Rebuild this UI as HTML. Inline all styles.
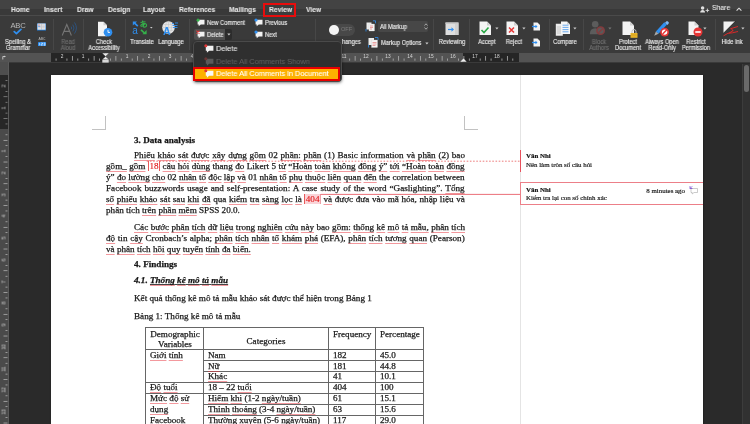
<!DOCTYPE html><html><head><meta charset="utf-8"><style>
html,body{margin:0;padding:0;}
body{width:750px;height:424px;overflow:hidden;position:relative;background:#2a2a2a;}
.t{position:absolute;white-space:nowrap;will-change:transform;}
.r{position:absolute;}
.sq{text-decoration:underline solid rgba(232,50,60,0.5);text-decoration-thickness:0.9px;text-underline-offset:2px;text-decoration-skip-ink:none;}
.doc{-webkit-text-stroke:0.25px #222;}
</style></head><body>
<div class="r" style="left:0.00px;top:0.00px;width:750.00px;height:8.50px;background:#434343;"></div>
<div class="r" style="left:0.00px;top:8.50px;width:750.00px;height:6.50px;background:#393939;"></div>
<div class="r" style="left:0.00px;top:15.00px;width:750.00px;height:1.00px;background:#4a4a4a;"></div>
<div class="r" style="left:0.00px;top:16.00px;width:750.00px;height:37.00px;background:#3a3a3a;"></div>
<div class="r" style="left:264.00px;top:4.00px;width:31.00px;height:12.50px;background:#3c3c3c;"></div>
<div class="t" style="top:5.77px;font:normal bold 7.6px/7.6px 'Liberation Sans', sans-serif;color:#e6e6e6;-webkit-text-stroke:0.08px #e6e6e6;left:11.30px;transform:scaleX(0.885);transform-origin:left center;">Home</div>
<div class="t" style="top:5.77px;font:normal bold 7.6px/7.6px 'Liberation Sans', sans-serif;color:#e6e6e6;-webkit-text-stroke:0.08px #e6e6e6;left:44.20px;transform:scaleX(0.885);transform-origin:left center;">Insert</div>
<div class="t" style="top:5.77px;font:normal bold 7.6px/7.6px 'Liberation Sans', sans-serif;color:#e6e6e6;-webkit-text-stroke:0.08px #e6e6e6;left:77.10px;transform:scaleX(0.885);transform-origin:left center;">Draw</div>
<div class="t" style="top:5.77px;font:normal bold 7.6px/7.6px 'Liberation Sans', sans-serif;color:#e6e6e6;-webkit-text-stroke:0.08px #e6e6e6;left:107.50px;transform:scaleX(0.885);transform-origin:left center;">Design</div>
<div class="t" style="top:5.77px;font:normal bold 7.6px/7.6px 'Liberation Sans', sans-serif;color:#e6e6e6;-webkit-text-stroke:0.08px #e6e6e6;left:143.10px;transform:scaleX(0.885);transform-origin:left center;">Layout</div>
<div class="t" style="top:5.77px;font:normal bold 7.6px/7.6px 'Liberation Sans', sans-serif;color:#e6e6e6;-webkit-text-stroke:0.08px #e6e6e6;left:178.80px;transform:scaleX(0.885);transform-origin:left center;">References</div>
<div class="t" style="top:5.77px;font:normal bold 7.6px/7.6px 'Liberation Sans', sans-serif;color:#e6e6e6;-webkit-text-stroke:0.08px #e6e6e6;left:228.90px;transform:scaleX(0.885);transform-origin:left center;">Mailings</div>
<div class="t" style="top:5.77px;font:normal bold 7.6px/7.6px 'Liberation Sans', sans-serif;color:#e6e6e6;-webkit-text-stroke:0.08px #e6e6e6;left:269.20px;transform:scaleX(0.885);transform-origin:left center;">Review</div>
<div class="t" style="top:5.77px;font:normal bold 7.6px/7.6px 'Liberation Sans', sans-serif;color:#e6e6e6;-webkit-text-stroke:0.08px #e6e6e6;left:305.90px;transform:scaleX(0.885);transform-origin:left center;">View</div>
<div class="r" style="left:263.00px;top:2.90px;width:32.80px;height:14.10px;background:transparent;box-sizing:border-box;border:2.2px solid #e80c0c;"></div>
<svg class="r" style="left:700px;top:5.5px" width="10" height="7" viewBox="0 0 10 7"><circle cx="2.6" cy="1.9" r="1.75" fill="#e0e0e0"/><path d="M0.2 6.6Q0.2 3.9 2.6 3.9Q5 3.9 5 6.6Z" fill="#e0e0e0"/><path d="M7.4 2.6v3.6M5.6 4.4h3.6" stroke="#e0e0e0" stroke-width="0.9"/></svg>
<div class="t" style="top:4.30px;font:normal normal 7.8px/7.8px 'Liberation Sans', sans-serif;color:#e6e6e6;-webkit-text-stroke:0.1px #e6e6e6;left:711.60px;transform:scaleX(0.88);transform-origin:left center;">Share</div>
<svg class="r" style="left:735.5px;top:7.3px" width="6" height="4.5" viewBox="0 0 6 4.5"><path d="M0.6 3.6L3 1.2L5.4 3.6" stroke="#e0e0e0" stroke-width="1.1" fill="none"/></svg>
<div class="r" style="left:53.30px;top:19.00px;width:1.00px;height:31.00px;background:#474747;"></div>
<div class="r" style="left:82.60px;top:19.00px;width:1.00px;height:31.00px;background:#474747;"></div>
<div class="r" style="left:125.20px;top:19.00px;width:1.00px;height:31.00px;background:#474747;"></div>
<div class="r" style="left:188.60px;top:19.00px;width:1.00px;height:31.00px;background:#474747;"></div>
<div class="r" style="left:315.30px;top:19.00px;width:1.00px;height:31.00px;background:#474747;"></div>
<div class="r" style="left:433.30px;top:19.00px;width:1.00px;height:31.00px;background:#474747;"></div>
<div class="r" style="left:468.80px;top:19.00px;width:1.00px;height:31.00px;background:#474747;"></div>
<div class="r" style="left:548.50px;top:19.00px;width:1.00px;height:31.00px;background:#474747;"></div>
<div class="r" style="left:582.60px;top:19.00px;width:1.00px;height:31.00px;background:#474747;"></div>
<div class="r" style="left:715.20px;top:19.00px;width:1.00px;height:31.00px;background:#474747;"></div>
<div class="t" style="top:21.58px;font:normal normal 7.7px/7.7px 'Liberation Sans', sans-serif;color:#b8b8b8;letter-spacing:-0.3px;left:-82.40px;width:200px;text-align:center;">ABC</div>
<svg class="r" style="left:13.3px;top:28.2px" width="9" height="7" viewBox="0 0 9 7"><path d="M1.3 3.7L3.4 5.6L7.9 1.4" stroke="#2f8ff0" stroke-width="1.8" fill="none" stroke-linecap="round" stroke-linejoin="round"/></svg>
<div class="t" style="top:38.97px;font:normal normal 6.3px/6.3px 'Liberation Sans', sans-serif;color:#ececec;-webkit-text-stroke:0.14px #ececec;left:-82.10px;width:200px;text-align:center;transform:scaleX(0.91);transform-origin:center center;">Spelling &</div>
<div class="t" style="top:44.87px;font:normal normal 6.3px/6.3px 'Liberation Sans', sans-serif;color:#ececec;-webkit-text-stroke:0.14px #ececec;left:-82.10px;width:200px;text-align:center;transform:scaleX(0.91);transform-origin:center center;">Grammar</div>
<svg class="r" style="left:37px;top:22.5px" width="9" height="8" viewBox="0 0 9 8"><rect x="0" y="0.5" width="9" height="7" fill="#1f7fe0"/><rect x="0.5" y="0.5" width="8" height="6.2" fill="#ececec"/><path d="M4.5 0.5v6.2" stroke="#999" stroke-width="0.4"/><path d="M1.2 2h2.6M1.2 3.4h2.6M1.2 4.8h2.6M5.2 2h2.6M5.2 3.4h2.6M5.2 4.8h2.6" stroke="#aab" stroke-width="0.5"/><path d="M1.2 2h1.5" stroke="#e05050" stroke-width="0.6"/><path d="M1.2 3.4h2" stroke="#3a8ae0" stroke-width="0.6"/></svg>
<div class="t" style="top:38.22px;font:normal normal 3.4px/3.4px 'Liberation Sans', sans-serif;color:#bdbdbd;left:-58.30px;width:200px;text-align:center;">ABC</div>
<svg class="r" style="left:37.5px;top:42.1px" width="8.5" height="4.3" viewBox="0 0 8.5 4.3"><rect x="0" y="0" width="8.5" height="4.3" rx="0.5" fill="#2f8ff0"/><path d="M1.6 1v2.3M3.2 1h1.3v1.15h-1.3v1.15h1.3M5.7 1h1.3v2.3h-1.3M5.7 2.15h1.3" stroke="#fff" stroke-width="0.55" fill="none"/></svg>
<svg class="r" style="left:60.5px;top:20.5px" width="16" height="16" viewBox="0 0 16 16"><path d="M1.2 14.5L5.8 3.5L10.4 14.5M2.9 10.4h5.8" stroke="#747474" stroke-width="1.1" fill="none"/><path d="M10.2 5.6q1 1.4 0 2.8M11.8 3.6q2.4 3.4 0 6.8M13.5 1.4q3.8 5.6 0 11.2" stroke="#2e527c" stroke-width="1" fill="none"/></svg>
<div class="t" style="top:38.97px;font:normal normal 6.3px/6.3px 'Liberation Sans', sans-serif;color:#707070;-webkit-text-stroke:0.14px #707070;left:-32.20px;width:200px;text-align:center;transform:scaleX(0.91);transform-origin:center center;">Read</div>
<div class="t" style="top:44.87px;font:normal normal 6.3px/6.3px 'Liberation Sans', sans-serif;color:#707070;-webkit-text-stroke:0.14px #707070;left:-32.00px;width:200px;text-align:center;transform:scaleX(0.91);transform-origin:center center;">Aloud</div>
<svg class="r" style="left:96.5px;top:20.5px" width="16" height="16" viewBox="0 0 16 16"><path d="M1 0.7h5.5l3.5 3.5v11H1z" fill="#f4f4f4"/><path d="M6.5 0.7v3.5h3.5" fill="#cfcfcf"/><circle cx="11" cy="11.2" r="4.3" fill="#2f8ff0"/><path d="M11 8.8v2.6h2" stroke="#fff" stroke-width="0.9" fill="none"/></svg>
<div class="t" style="top:38.97px;font:normal normal 6.3px/6.3px 'Liberation Sans', sans-serif;color:#ececec;-webkit-text-stroke:0.14px #ececec;left:3.90px;width:200px;text-align:center;transform:scaleX(0.91);transform-origin:center center;">Check</div>
<div class="t" style="top:44.87px;font:normal normal 6.3px/6.3px 'Liberation Sans', sans-serif;color:#ececec;-webkit-text-stroke:0.14px #ececec;left:3.70px;width:200px;text-align:center;transform:scaleX(0.91);transform-origin:center center;">Accessibility</div>
<svg class="r" style="left:131px;top:19px" width="23" height="17" viewBox="0 0 23 17"><path d="M6.8 7.2L3 3.6" stroke="#2f8ff0" stroke-width="1.7"/><path d="M1.8 2.4h4.2l-4.2 4.2z" fill="#2f8ff0"/><text x="1.2" y="14.9" font-family="Liberation Sans" font-size="10" fill="#2f8ff0">a</text><path d="M9.5 3.4l5-0.6M11.6 1.5q0.2 3.5 1.3 7.2M13.8 4.6q-2.5 3.5-3.8 2.5q-1-1 2-2.3q3.5-1 3.6 1.4q0 1.8-2.4 2" stroke="#35b04a" stroke-width="1.05" fill="none"/><path d="M10 10.8l3.4 3.2" stroke="#35b04a" stroke-width="1.7"/><path d="M15.6 15.2h-4.2l4.2-4.2z" fill="#35b04a"/><path d="M19 8h2.6l-1.3 1.5z" fill="#ccc"/></svg>
<div class="t" style="top:38.97px;font:normal normal 6.3px/6.3px 'Liberation Sans', sans-serif;color:#ececec;-webkit-text-stroke:0.14px #ececec;left:42.40px;width:200px;text-align:center;transform:scaleX(0.91);transform-origin:center center;">Translate</div>
<svg class="r" style="left:161px;top:20px" width="20" height="16" viewBox="0 0 20 16"><circle cx="7.5" cy="7.5" r="6.3" fill="#e6e6e6"/><path d="M1.5 7.5h12M7.5 1.2v12.6M2.5 4.5h10M2.5 10.5h10" stroke="#b8b8b8" stroke-width="0.35"/><ellipse cx="7.5" cy="7.5" rx="3" ry="6.3" stroke="#b8b8b8" stroke-width="0.35" fill="none"/><path d="M11 3.5h2M14 3h3M11.5 5.5h5M12 7.5h4.5" stroke="#2f8ff0" stroke-width="0.9"/><text x="2" y="15" font-family="Liberation Sans" font-weight="bold" font-size="10.5" fill="#2f8ff0">A</text></svg>
<div class="t" style="top:38.97px;font:normal normal 6.3px/6.3px 'Liberation Sans', sans-serif;color:#ececec;-webkit-text-stroke:0.14px #ececec;left:70.50px;width:200px;text-align:center;transform:scaleX(0.91);transform-origin:center center;">Language</div>
<div class="r" style="left:194.00px;top:29.20px;width:31.00px;height:10.40px;background:#505050;border-radius:2px 0 0 2px;"></div>
<div class="r" style="left:225.00px;top:29.20px;width:7.20px;height:10.40px;background:#2c2c2c;border-radius:0 2px 2px 0;"></div>
<svg class="r" style="left:227px;top:33px" width="4" height="3" viewBox="0 0 4 3"><path d="M0.3 0.5h3.2l-1.6 2z" fill="#ccc"/></svg>
<svg class="r" style="left:196px;top:18.2px" width="11" height="10" viewBox="0 0 11 10"><path d="M1.6 1.7h6.9v4.8h-3.7l-2.1 1.8v-1.8h-1.1z" fill="#f2f2f2"/><path d="M2 0.3l1.9 1.9l-1.9 1.9l-1.9-1.9z" fill="#35b04a"/></svg>
<div class="t" style="top:19.67px;font:normal normal 6.3px/6.3px 'Liberation Sans', sans-serif;color:#ececec;-webkit-text-stroke:0.14px #ececec;left:207.40px;transform:scaleX(0.91);transform-origin:left center;">New Comment</div>
<svg class="r" style="left:196px;top:29.8px" width="11" height="10" viewBox="0 0 11 10"><path d="M1.6 1.7h6.9v4.8h-3.7l-2.1 1.8v-1.8h-1.1z" fill="#f2f2f2"/><path d="M0.4 0.6l3 3M3.4 0.6l-3 3" stroke="#e03838" stroke-width="1.1"/></svg>
<div class="t" style="top:31.67px;font:normal normal 6.3px/6.3px 'Liberation Sans', sans-serif;color:#ececec;-webkit-text-stroke:0.14px #ececec;left:207.40px;transform:scaleX(0.91);transform-origin:left center;">Delete</div>
<svg class="r" style="left:253.5px;top:18.2px" width="11" height="10" viewBox="0 0 11 10"><path d="M1.6 1.7h6.9v4.8h-3.7l-2.1 1.8v-1.8h-1.1z" fill="#f2f2f2"/><circle cx="2" cy="2" r="1.6" fill="#2f8ff0"/></svg>
<div class="t" style="top:19.67px;font:normal normal 6.3px/6.3px 'Liberation Sans', sans-serif;color:#ececec;-webkit-text-stroke:0.14px #ececec;left:264.70px;transform:scaleX(0.91);transform-origin:left center;">Previous</div>
<svg class="r" style="left:253.5px;top:29.8px" width="11" height="10" viewBox="0 0 11 10"><path d="M1.6 1.7h6.9v4.8h-3.7l-2.1 1.8v-1.8h-1.1z" fill="#f2f2f2"/><circle cx="2" cy="2" r="1.6" fill="#2f8ff0"/></svg>
<div class="t" style="top:31.67px;font:normal normal 6.3px/6.3px 'Liberation Sans', sans-serif;color:#ececec;-webkit-text-stroke:0.14px #ececec;left:264.70px;transform:scaleX(0.91);transform-origin:left center;">Next</div>
<div class="r" style="left:328.80px;top:24.40px;width:26.40px;height:11.20px;background:#484848;border-radius:6px;"></div>
<div class="r" style="left:328.90px;top:24.60px;width:10.60px;height:10.80px;background:#f4f4f4;border-radius:50%;"></div>
<div class="t" style="top:27.16px;font:normal normal 5.6px/5.6px 'Liberation Sans', sans-serif;color:#7a7a7a;left:341.30px;">OFF</div>
<div class="t" style="top:38.97px;font:normal normal 6.3px/6.3px 'Liberation Sans', sans-serif;color:#ececec;-webkit-text-stroke:0.14px #ececec;left:342.20px;transform:scaleX(0.91);transform-origin:left center;">hanges</div>
<svg class="r" style="left:365px;top:20px" width="12" height="12" viewBox="0 0 12 12"><rect x="1.5" y="2.5" width="5" height="7" fill="#eee"/><rect x="4" y="4" width="5.5" height="7" fill="#f4f4f4" stroke="#ccc" stroke-width="0.3"/><path d="M5 6h3M5 7.5h3M5 9h2" stroke="#e05050" stroke-width="0.5"/><path d="M8 0.8h2.5v2.5M1 11.5v-2.5" stroke="#2f8ff0" stroke-width="0.8" fill="none"/></svg>
<div class="r" style="left:378.00px;top:21.20px;width:50.40px;height:10.40px;background:#474747;border-radius:2px;"></div>
<div class="t" style="top:23.97px;font:normal normal 6.3px/6.3px 'Liberation Sans', sans-serif;color:#ececec;-webkit-text-stroke:0.14px #ececec;left:380.00px;transform:scaleX(0.91);transform-origin:left center;">All Markup</div>
<svg class="r" style="left:423.5px;top:22.5px" width="4" height="7" viewBox="0 0 4 7"><path d="M0.5 2.5L2 0.8L3.5 2.5M0.5 4.5L2 6.2L3.5 4.5" stroke="#ccc" stroke-width="0.7" fill="none"/></svg>
<svg class="r" style="left:368px;top:36.5px" width="11" height="11" viewBox="0 0 11 11"><rect x="0.5" y="1" width="5.5" height="7" fill="#eee"/><rect x="3.5" y="3" width="6" height="7.5" fill="#f4f4f4" stroke="#ccc" stroke-width="0.3"/><path d="M4.5 5.5h4M4.5 7h4M4.5 8.5h3" stroke="#e05050" stroke-width="0.5"/><path d="M7 0.5h3v2.5M0.5 10.5v-2.5" stroke="#2f8ff0" stroke-width="0.8" fill="none"/></svg>
<div class="t" style="top:39.87px;font:normal normal 6.3px/6.3px 'Liberation Sans', sans-serif;color:#ececec;-webkit-text-stroke:0.14px #ececec;left:380.90px;transform:scaleX(0.91);transform-origin:left center;">Markup Options</div>
<svg class="r" style="left:424.5px;top:41.5px" width="4" height="3" viewBox="0 0 4 3"><path d="M0.3 0.5h3.2l-1.6 2z" fill="#ccc"/></svg>
<svg class="r" style="left:444.5px;top:21.5px" width="14" height="13.5" viewBox="0 0 14 13.5"><rect x="0.5" y="0.5" width="13" height="12.5" fill="#dedede"/><rect x="0.5" y="0.5" width="13" height="1.5" fill="#c8c8c8"/><rect x="10" y="2" width="3.5" height="11" fill="#cfcfcf"/><path d="M3 7.5h5" stroke="#2f8ff0" stroke-width="1.2"/><path d="M6.5 5.3l2.5 2.2l-2.5 2.2z" fill="#2f8ff0"/></svg>
<div class="t" style="top:38.97px;font:normal normal 6.3px/6.3px 'Liberation Sans', sans-serif;color:#ececec;-webkit-text-stroke:0.14px #ececec;left:351.80px;width:200px;text-align:center;transform:scaleX(0.91);transform-origin:center center;">Reviewing</div>
<svg class="r" style="left:478.5px;top:21px" width="13" height="16" viewBox="0 0 13 16"><path d="M0.5 0.5h7.5l4 4v9.5h-11.5z" fill="#f4f4f4"/><path d="M8.0 0.5v4h4" fill="#d0d0d0"/><path d="M2.5 9L5 11.5L9.5 6.5" stroke="#2aa845" stroke-width="1.6" fill="none"/></svg>
<svg class="r" style="left:494.5px;top:27px" width="4" height="3" viewBox="0 0 4 3"><path d="M0.3 0.5h3.2l-1.6 2z" fill="#ccc"/></svg>
<div class="t" style="top:38.97px;font:normal normal 6.3px/6.3px 'Liberation Sans', sans-serif;color:#ececec;-webkit-text-stroke:0.14px #ececec;left:386.80px;width:200px;text-align:center;transform:scaleX(0.91);transform-origin:center center;">Accept</div>
<svg class="r" style="left:505.8px;top:21px" width="13" height="16" viewBox="0 0 13 16"><path d="M0.5 0.5h7.5l4 4v9.5h-11.5z" fill="#f4f4f4"/><path d="M8.0 0.5v4h4" fill="#d0d0d0"/><path d="M3 6.5l5 5M8 6.5l-5 5" stroke="#e53535" stroke-width="1.5"/></svg>
<svg class="r" style="left:521.6px;top:27px" width="4" height="3" viewBox="0 0 4 3"><path d="M0.3 0.5h3.2l-1.6 2z" fill="#ccc"/></svg>
<div class="t" style="top:38.97px;font:normal normal 6.3px/6.3px 'Liberation Sans', sans-serif;color:#ececec;-webkit-text-stroke:0.14px #ececec;left:413.80px;width:200px;text-align:center;transform:scaleX(0.91);transform-origin:center center;">Reject</div>
<svg class="r" style="left:532px;top:22.3px" width="9" height="9" viewBox="0 0 9 9"><path d="M1.5 0.5h4l2.5 2.5v5.5h-6.5z" fill="#f2f2f2"/><path d="M0 4.5h4.5" stroke="#2f8ff0" stroke-width="1.3"/><path d="M3.5 2.8l2 1.7l-2 1.7z" fill="#2f8ff0"/></svg>
<svg class="r" style="left:532px;top:37.5px" width="9" height="9" viewBox="0 0 9 9"><path d="M1.5 0.5h4l2.5 2.5v5.5h-6.5z" fill="#f2f2f2"/><path d="M0 4.5h4.5" stroke="#2f8ff0" stroke-width="1.3"/><path d="M3.5 2.8l2 1.7l-2 1.7z" fill="#2f8ff0"/></svg>
<svg class="r" style="left:555px;top:20.5px" width="17" height="16" viewBox="0 0 17 16"><path d="M0.8 2.8h5.5l1.5 1.5v10.5h-7z" fill="#ececec"/><path d="M1.8 6h4.5M1.8 8h4.5M1.8 10h4.5M1.8 12h4.5" stroke="#aaa" stroke-width="0.55"/><path d="M6 0.5h6l3 3v9.5h-9z" fill="#f6f6f6"/><path d="M12 0.5v3h3" fill="#cfcfcf"/><path d="M7.5 4.2h6M7.5 6.4h6M7.5 8.6h6M7.5 10.8h6" stroke="#5aa2ee" stroke-width="0.9"/></svg>
<svg class="r" style="left:573px;top:27px" width="4" height="3" viewBox="0 0 4 3"><path d="M0.3 0.5h3.2l-1.6 2z" fill="#ccc"/></svg>
<div class="t" style="top:38.97px;font:normal normal 6.3px/6.3px 'Liberation Sans', sans-serif;color:#ececec;-webkit-text-stroke:0.14px #ececec;left:465.20px;width:200px;text-align:center;transform:scaleX(0.91);transform-origin:center center;">Compare</div>
<svg class="r" style="left:589px;top:20px" width="17" height="16" viewBox="0 0 17 16"><circle cx="6.2" cy="4.3" r="3.3" fill="#5c5c5c"/><path d="M0.8 14.2q0-6 5.4-6q5.4 0 5.4 6z" fill="#5c5c5c"/><circle cx="11.6" cy="10.7" r="4.4" fill="#843c3e"/><circle cx="11.6" cy="10.7" r="2.9" fill="#5a5a5a"/><path d="M9.4 12.9l4.4-4.4" stroke="#843c3e" stroke-width="1.3"/></svg>
<svg class="r" style="left:607.5px;top:27px" width="4" height="3" viewBox="0 0 4 3"><path d="M0.3 0.5h3.2l-1.6 2z" fill="#777"/></svg>
<div class="t" style="top:38.97px;font:normal normal 6.3px/6.3px 'Liberation Sans', sans-serif;color:#707070;-webkit-text-stroke:0.14px #707070;left:499.20px;width:200px;text-align:center;transform:scaleX(0.91);transform-origin:center center;">Block</div>
<div class="t" style="top:44.87px;font:normal normal 6.3px/6.3px 'Liberation Sans', sans-serif;color:#707070;-webkit-text-stroke:0.14px #707070;left:499.20px;width:200px;text-align:center;transform:scaleX(0.91);transform-origin:center center;">Authors</div>
<svg class="r" style="left:622px;top:21px" width="13" height="16" viewBox="0 0 13 16"><path d="M0.5 0.5h7.5l4 4v9.5h-11.5z" fill="#f4f4f4"/><path d="M8.0 0.5v4h4" fill="#d0d0d0"/></svg>
<svg class="r" style="left:629.5px;top:28.5px" width="8" height="9" viewBox="0 0 8 9"><path d="M2 4v-1.5a2 2 0 0 1 4 0v1.5" stroke="#bdbdbd" stroke-width="1" fill="none"/><rect x="0.5" y="4" width="7" height="4.8" fill="#e9b62a"/><path d="M1.2 5.4h5.6M1.2 6.6h5.6" stroke="#c99418" stroke-width="0.35"/></svg>
<div class="t" style="top:38.97px;font:normal normal 6.3px/6.3px 'Liberation Sans', sans-serif;color:#ececec;-webkit-text-stroke:0.14px #ececec;left:527.90px;width:200px;text-align:center;transform:scaleX(0.91);transform-origin:center center;">Protect</div>
<div class="t" style="top:44.87px;font:normal normal 6.3px/6.3px 'Liberation Sans', sans-serif;color:#ececec;-webkit-text-stroke:0.14px #ececec;left:528.00px;width:200px;text-align:center;transform:scaleX(0.91);transform-origin:center center;">Document</div>
<svg class="r" style="left:653px;top:20px" width="17" height="17" viewBox="0 0 17 17"><path d="M4.2 12.6L12.6 3.4" stroke="#2f8ff0" stroke-width="3.6"/><path d="M12 2.8l1.2-1.3a1.2 1.2 0 0 1 1.7 0l0.6 0.6a1.2 1.2 0 0 1 0 1.7l-1.2 1.3z" fill="#7db8f5"/><path d="M2.9 11.4l2.6 2.4l-4.3 2z" fill="#a9a9a9"/><circle cx="11.6" cy="12.1" r="4.4" fill="#e53535"/><circle cx="11.6" cy="12.1" r="2.7" fill="#fff"/><path d="M9.6 14.1l4-4" stroke="#e53535" stroke-width="1.4"/></svg>
<div class="t" style="top:38.97px;font:normal normal 6.3px/6.3px 'Liberation Sans', sans-serif;color:#ececec;-webkit-text-stroke:0.14px #ececec;left:561.60px;width:200px;text-align:center;transform:scaleX(0.91);transform-origin:center center;">Always Open</div>
<div class="t" style="top:44.87px;font:normal normal 6.3px/6.3px 'Liberation Sans', sans-serif;color:#ececec;-webkit-text-stroke:0.14px #ececec;left:561.90px;width:200px;text-align:center;transform:scaleX(0.91);transform-origin:center center;">Read-Only</div>
<svg class="r" style="left:688px;top:21px" width="12" height="16" viewBox="0 0 12 16"><path d="M0.5 0.5h6l4 4v9.5h-10z" fill="#f4f4f4"/><path d="M6.5 0.5v4h4" fill="#d0d0d0"/></svg>
<svg class="r" style="left:692.5px;top:26.8px" width="10" height="10" viewBox="0 0 10 10"><circle cx="5" cy="5" r="4.5" fill="#e53535"/><rect x="2.3" y="4.2" width="5.4" height="1.6" fill="#fff"/></svg>
<svg class="r" style="left:703px;top:27px" width="4" height="3" viewBox="0 0 4 3"><path d="M0.3 0.5h3.2l-1.6 2z" fill="#ccc"/></svg>
<div class="t" style="top:38.97px;font:normal normal 6.3px/6.3px 'Liberation Sans', sans-serif;color:#ececec;-webkit-text-stroke:0.14px #ececec;left:595.90px;width:200px;text-align:center;transform:scaleX(0.91);transform-origin:center center;">Restrict</div>
<div class="t" style="top:44.87px;font:normal normal 6.3px/6.3px 'Liberation Sans', sans-serif;color:#ececec;-webkit-text-stroke:0.14px #ececec;left:596.10px;width:200px;text-align:center;transform:scaleX(0.91);transform-origin:center center;">Permission</div>
<svg class="r" style="left:722.5px;top:20.5px" width="16" height="16" viewBox="0 0 16 16"><path d="M0.5 0.5h11.7l-11.7 11.7z" fill="#f2f2f2"/><path d="M0.4 12.3L12.3 0.4" stroke="#151515" stroke-width="0.8"/><path d="M7.8 7.6L14.6 5.6M8.2 7.4l1.8 2.4M0.8 14.6Q5 11.2 9.5 11.8L14.6 10.6M9.8 9.8L6.2 12" stroke="#e02828" stroke-width="0.95" fill="none" stroke-linecap="round"/></svg>
<svg class="r" style="left:741px;top:27px" width="4" height="3" viewBox="0 0 4 3"><path d="M0.3 0.5h3.2l-1.6 2z" fill="#ccc"/></svg>
<div class="t" style="top:38.97px;font:normal normal 6.3px/6.3px 'Liberation Sans', sans-serif;color:#ececec;-webkit-text-stroke:0.14px #ececec;left:632.40px;width:200px;text-align:center;transform:scaleX(0.91);transform-origin:center center;">Hide Ink</div>
<div class="r" style="left:0.00px;top:53.00px;width:750.00px;height:9.00px;background:#535353;"></div>
<div class="r" style="left:50.50px;top:53.00px;width:54.50px;height:9.00px;background:#252525;"></div>
<div class="r" style="left:463.30px;top:53.00px;width:55.40px;height:9.00px;background:#252525;"></div>
<div class="r" style="left:0.00px;top:61.60px;width:750.00px;height:0.40px;background:#3a3a3a;"></div>
<svg class="r" style="left:2px;top:55px" width="4" height="5" viewBox="0 0 4 5"><path d="M0.8 4.5v-3h2.5" stroke="#ddd" stroke-width="0.8" fill="none"/><path d="M2.5 0.5l1 1l-1 1z" fill="#ddd"/></svg>
<svg class="r" style="left:0;top:53px" width="750" height="9"><rect x="55.66" y="5.5" width="0.8" height="2.2" fill="#b0b0b0"/><rect x="66.54" y="5.5" width="0.8" height="2.2" fill="#b0b0b0"/><rect x="71.97" y="3" width="0.8" height="4.7" fill="#b0b0b0"/><rect x="77.41" y="5.5" width="0.8" height="2.2" fill="#b0b0b0"/><rect x="88.29" y="5.5" width="0.8" height="2.2" fill="#b0b0b0"/><rect x="93.72" y="3" width="0.8" height="4.7" fill="#b0b0b0"/><rect x="99.16" y="5.5" width="0.8" height="2.2" fill="#b0b0b0"/><rect x="110.04" y="5.5" width="0.8" height="2.2" fill="#b0b0b0"/><rect x="115.47" y="3" width="0.8" height="4.7" fill="#b0b0b0"/><rect x="120.91" y="5.5" width="0.8" height="2.2" fill="#b0b0b0"/><rect x="131.79" y="5.5" width="0.8" height="2.2" fill="#b0b0b0"/><rect x="137.22" y="3" width="0.8" height="4.7" fill="#b0b0b0"/><rect x="142.66" y="5.5" width="0.8" height="2.2" fill="#b0b0b0"/><rect x="153.54" y="5.5" width="0.8" height="2.2" fill="#b0b0b0"/><rect x="158.97" y="3" width="0.8" height="4.7" fill="#b0b0b0"/><rect x="164.41" y="5.5" width="0.8" height="2.2" fill="#b0b0b0"/><rect x="175.29" y="5.5" width="0.8" height="2.2" fill="#b0b0b0"/><rect x="180.72" y="3" width="0.8" height="4.7" fill="#b0b0b0"/><rect x="186.16" y="5.5" width="0.8" height="2.2" fill="#b0b0b0"/><rect x="197.04" y="5.5" width="0.8" height="2.2" fill="#b0b0b0"/><rect x="202.47" y="3" width="0.8" height="4.7" fill="#b0b0b0"/><rect x="207.91" y="5.5" width="0.8" height="2.2" fill="#b0b0b0"/><rect x="218.79" y="5.5" width="0.8" height="2.2" fill="#b0b0b0"/><rect x="224.22" y="3" width="0.8" height="4.7" fill="#b0b0b0"/><rect x="229.66" y="5.5" width="0.8" height="2.2" fill="#b0b0b0"/><rect x="240.54" y="5.5" width="0.8" height="2.2" fill="#b0b0b0"/><rect x="245.97" y="3" width="0.8" height="4.7" fill="#b0b0b0"/><rect x="251.41" y="5.5" width="0.8" height="2.2" fill="#b0b0b0"/><rect x="262.29" y="5.5" width="0.8" height="2.2" fill="#b0b0b0"/><rect x="267.73" y="3" width="0.8" height="4.7" fill="#b0b0b0"/><rect x="273.16" y="5.5" width="0.8" height="2.2" fill="#b0b0b0"/><rect x="284.04" y="5.5" width="0.8" height="2.2" fill="#b0b0b0"/><rect x="289.48" y="3" width="0.8" height="4.7" fill="#b0b0b0"/><rect x="294.91" y="5.5" width="0.8" height="2.2" fill="#b0b0b0"/><rect x="305.79" y="5.5" width="0.8" height="2.2" fill="#b0b0b0"/><rect x="311.23" y="3" width="0.8" height="4.7" fill="#b0b0b0"/><rect x="316.66" y="5.5" width="0.8" height="2.2" fill="#b0b0b0"/><rect x="327.54" y="5.5" width="0.8" height="2.2" fill="#b0b0b0"/><rect x="332.98" y="3" width="0.8" height="4.7" fill="#b0b0b0"/><rect x="338.41" y="5.5" width="0.8" height="2.2" fill="#b0b0b0"/><rect x="349.29" y="5.5" width="0.8" height="2.2" fill="#b0b0b0"/><rect x="354.73" y="3" width="0.8" height="4.7" fill="#b0b0b0"/><rect x="360.16" y="5.5" width="0.8" height="2.2" fill="#b0b0b0"/><rect x="371.04" y="5.5" width="0.8" height="2.2" fill="#b0b0b0"/><rect x="376.48" y="3" width="0.8" height="4.7" fill="#b0b0b0"/><rect x="381.91" y="5.5" width="0.8" height="2.2" fill="#b0b0b0"/><rect x="392.79" y="5.5" width="0.8" height="2.2" fill="#b0b0b0"/><rect x="398.23" y="3" width="0.8" height="4.7" fill="#b0b0b0"/><rect x="403.66" y="5.5" width="0.8" height="2.2" fill="#b0b0b0"/><rect x="414.54" y="5.5" width="0.8" height="2.2" fill="#b0b0b0"/><rect x="419.98" y="3" width="0.8" height="4.7" fill="#b0b0b0"/><rect x="425.41" y="5.5" width="0.8" height="2.2" fill="#b0b0b0"/><rect x="436.29" y="5.5" width="0.8" height="2.2" fill="#b0b0b0"/><rect x="441.73" y="3" width="0.8" height="4.7" fill="#b0b0b0"/><rect x="447.16" y="5.5" width="0.8" height="2.2" fill="#b0b0b0"/><rect x="458.04" y="5.5" width="0.8" height="2.2" fill="#b0b0b0"/><rect x="463.48" y="3" width="0.8" height="4.7" fill="#b0b0b0"/><rect x="468.91" y="5.5" width="0.8" height="2.2" fill="#b0b0b0"/><rect x="479.79" y="5.5" width="0.8" height="2.2" fill="#b0b0b0"/><rect x="485.23" y="3" width="0.8" height="4.7" fill="#b0b0b0"/><rect x="490.66" y="5.5" width="0.8" height="2.2" fill="#b0b0b0"/><rect x="501.54" y="5.5" width="0.8" height="2.2" fill="#b0b0b0"/><rect x="506.98" y="3" width="0.8" height="4.7" fill="#b0b0b0"/><rect x="512.41" y="5.5" width="0.8" height="2.2" fill="#b0b0b0"/></svg>
<div class="t" style="top:54.54px;font:normal normal 4.8px/4.8px 'Liberation Sans', sans-serif;color:#d8d8d8;left:-38.50px;width:200px;text-align:center;">2</div>
<div class="t" style="top:54.54px;font:normal normal 4.8px/4.8px 'Liberation Sans', sans-serif;color:#d8d8d8;left:-16.75px;width:200px;text-align:center;">1</div>
<div class="t" style="top:54.54px;font:normal normal 4.8px/4.8px 'Liberation Sans', sans-serif;color:#d8d8d8;left:26.75px;width:200px;text-align:center;">1</div>
<div class="t" style="top:54.54px;font:normal normal 4.8px/4.8px 'Liberation Sans', sans-serif;color:#d8d8d8;left:48.50px;width:200px;text-align:center;">2</div>
<div class="t" style="top:54.54px;font:normal normal 4.8px/4.8px 'Liberation Sans', sans-serif;color:#d8d8d8;left:70.25px;width:200px;text-align:center;">3</div>
<div class="t" style="top:54.54px;font:normal normal 4.8px/4.8px 'Liberation Sans', sans-serif;color:#d8d8d8;left:92.00px;width:200px;text-align:center;">4</div>
<div class="t" style="top:54.54px;font:normal normal 4.8px/4.8px 'Liberation Sans', sans-serif;color:#d8d8d8;left:113.75px;width:200px;text-align:center;">5</div>
<div class="t" style="top:54.54px;font:normal normal 4.8px/4.8px 'Liberation Sans', sans-serif;color:#d8d8d8;left:135.50px;width:200px;text-align:center;">6</div>
<div class="t" style="top:54.54px;font:normal normal 4.8px/4.8px 'Liberation Sans', sans-serif;color:#d8d8d8;left:157.25px;width:200px;text-align:center;">7</div>
<div class="t" style="top:54.54px;font:normal normal 4.8px/4.8px 'Liberation Sans', sans-serif;color:#d8d8d8;left:179.00px;width:200px;text-align:center;">8</div>
<div class="t" style="top:54.54px;font:normal normal 4.8px/4.8px 'Liberation Sans', sans-serif;color:#d8d8d8;left:200.75px;width:200px;text-align:center;">9</div>
<div class="t" style="top:54.54px;font:normal normal 4.8px/4.8px 'Liberation Sans', sans-serif;color:#d8d8d8;left:222.50px;width:200px;text-align:center;">10</div>
<div class="t" style="top:54.54px;font:normal normal 4.8px/4.8px 'Liberation Sans', sans-serif;color:#d8d8d8;left:244.25px;width:200px;text-align:center;">11</div>
<div class="t" style="top:54.54px;font:normal normal 4.8px/4.8px 'Liberation Sans', sans-serif;color:#d8d8d8;left:266.00px;width:200px;text-align:center;">12</div>
<div class="t" style="top:54.54px;font:normal normal 4.8px/4.8px 'Liberation Sans', sans-serif;color:#d8d8d8;left:287.75px;width:200px;text-align:center;">13</div>
<div class="t" style="top:54.54px;font:normal normal 4.8px/4.8px 'Liberation Sans', sans-serif;color:#d8d8d8;left:309.50px;width:200px;text-align:center;">14</div>
<div class="t" style="top:54.54px;font:normal normal 4.8px/4.8px 'Liberation Sans', sans-serif;color:#d8d8d8;left:331.25px;width:200px;text-align:center;">15</div>
<div class="t" style="top:54.54px;font:normal normal 4.8px/4.8px 'Liberation Sans', sans-serif;color:#d8d8d8;left:353.00px;width:200px;text-align:center;">16</div>
<div class="t" style="top:54.54px;font:normal normal 4.8px/4.8px 'Liberation Sans', sans-serif;color:#d8d8d8;left:374.75px;width:200px;text-align:center;">17</div>
<div class="t" style="top:54.54px;font:normal normal 4.8px/4.8px 'Liberation Sans', sans-serif;color:#d8d8d8;left:396.50px;width:200px;text-align:center;">18</div>
<svg class="r" style="left:101.5px;top:53px" width="7" height="10" viewBox="0 0 7 10"><path d="M0.3 0.3h6.4l-3.2 3z" fill="#e8e8e8"/><path d="M3.5 3.8l3.2 2.6h-6.4z" fill="#e8e8e8"/><rect x="0.3" y="6.8" width="6.4" height="2.8" fill="#d8d8d8"/></svg>
<svg class="r" style="left:460px;top:58px" width="7" height="4" viewBox="0 0 7 4"><path d="M0.3 3.8l3.2-3.2l3.2 3.2z" fill="#eee"/></svg>
<div class="r" style="left:0.00px;top:62.00px;width:8.80px;height:13.00px;background:#4e4e4e;"></div>
<div class="r" style="left:0.00px;top:75.00px;width:8.80px;height:54.40px;background:#272727;"></div>
<div class="r" style="left:0.00px;top:129.40px;width:8.80px;height:294.60px;background:#4a4a4a;"></div>
<div class="r" style="left:8.30px;top:62.00px;width:0.80px;height:362.00px;background:#5a5a5a;"></div>
<svg class="r" style="left:0;top:0" width="9" height="424"><rect x="5.5" y="123.66" width="2" height="0.6" fill="#aaa"/><rect x="3.5" y="118.23" width="4" height="0.6" fill="#aaa"/><rect x="5.5" y="112.79" width="2" height="0.6" fill="#aaa"/><rect x="5.5" y="101.91" width="2" height="0.6" fill="#aaa"/><rect x="3.5" y="96.48" width="4" height="0.6" fill="#aaa"/><rect x="5.5" y="91.04" width="2" height="0.6" fill="#aaa"/><rect x="5.5" y="80.16" width="2" height="0.6" fill="#aaa"/><rect x="5.5" y="134.54" width="2" height="0.6" fill="#cfcfcf"/><rect x="3.5" y="139.97" width="4" height="0.6" fill="#cfcfcf"/><rect x="5.5" y="145.41" width="2" height="0.6" fill="#cfcfcf"/><rect x="5.5" y="156.29" width="2" height="0.6" fill="#cfcfcf"/><rect x="3.5" y="161.72" width="4" height="0.6" fill="#cfcfcf"/><rect x="5.5" y="167.16" width="2" height="0.6" fill="#cfcfcf"/><rect x="5.5" y="178.04" width="2" height="0.6" fill="#cfcfcf"/><rect x="3.5" y="183.47" width="4" height="0.6" fill="#cfcfcf"/><rect x="5.5" y="188.91" width="2" height="0.6" fill="#cfcfcf"/><rect x="5.5" y="199.79" width="2" height="0.6" fill="#cfcfcf"/><rect x="3.5" y="205.22" width="4" height="0.6" fill="#cfcfcf"/><rect x="5.5" y="210.66" width="2" height="0.6" fill="#cfcfcf"/><rect x="5.5" y="221.54" width="2" height="0.6" fill="#cfcfcf"/><rect x="3.5" y="226.97" width="4" height="0.6" fill="#cfcfcf"/><rect x="5.5" y="232.41" width="2" height="0.6" fill="#cfcfcf"/><rect x="5.5" y="243.29" width="2" height="0.6" fill="#cfcfcf"/><rect x="3.5" y="248.72" width="4" height="0.6" fill="#cfcfcf"/><rect x="5.5" y="254.16" width="2" height="0.6" fill="#cfcfcf"/><rect x="5.5" y="265.04" width="2" height="0.6" fill="#cfcfcf"/><rect x="3.5" y="270.47" width="4" height="0.6" fill="#cfcfcf"/><rect x="5.5" y="275.91" width="2" height="0.6" fill="#cfcfcf"/><rect x="5.5" y="286.79" width="2" height="0.6" fill="#cfcfcf"/><rect x="3.5" y="292.22" width="4" height="0.6" fill="#cfcfcf"/><rect x="5.5" y="297.66" width="2" height="0.6" fill="#cfcfcf"/><rect x="5.5" y="308.54" width="2" height="0.6" fill="#cfcfcf"/><rect x="3.5" y="313.97" width="4" height="0.6" fill="#cfcfcf"/><rect x="5.5" y="319.41" width="2" height="0.6" fill="#cfcfcf"/><rect x="5.5" y="330.29" width="2" height="0.6" fill="#cfcfcf"/><rect x="3.5" y="335.72" width="4" height="0.6" fill="#cfcfcf"/><rect x="5.5" y="341.16" width="2" height="0.6" fill="#cfcfcf"/><rect x="5.5" y="352.04" width="2" height="0.6" fill="#cfcfcf"/><rect x="3.5" y="357.47" width="4" height="0.6" fill="#cfcfcf"/><rect x="5.5" y="362.91" width="2" height="0.6" fill="#cfcfcf"/><rect x="5.5" y="373.79" width="2" height="0.6" fill="#cfcfcf"/><rect x="3.5" y="379.22" width="4" height="0.6" fill="#cfcfcf"/><rect x="5.5" y="384.66" width="2" height="0.6" fill="#cfcfcf"/><rect x="5.5" y="395.54" width="2" height="0.6" fill="#cfcfcf"/><rect x="3.5" y="400.97" width="4" height="0.6" fill="#cfcfcf"/><rect x="5.5" y="406.41" width="2" height="0.6" fill="#cfcfcf"/><rect x="5.5" y="417.29" width="2" height="0.6" fill="#cfcfcf"/><rect x="3.5" y="422.72" width="4" height="0.6" fill="#cfcfcf"/></svg>
<div class="t" style="left:0px;top:148.15px;width:9px;height:6px;font:4.6px/6px 'Liberation Sans', sans-serif;color:#d8d8d8;text-align:center;transform:rotate(-90deg)">1</div>
<div class="t" style="left:0px;top:169.90px;width:9px;height:6px;font:4.6px/6px 'Liberation Sans', sans-serif;color:#d8d8d8;text-align:center;transform:rotate(-90deg)">2</div>
<div class="t" style="left:0px;top:191.65px;width:9px;height:6px;font:4.6px/6px 'Liberation Sans', sans-serif;color:#d8d8d8;text-align:center;transform:rotate(-90deg)">3</div>
<div class="t" style="left:0px;top:213.40px;width:9px;height:6px;font:4.6px/6px 'Liberation Sans', sans-serif;color:#d8d8d8;text-align:center;transform:rotate(-90deg)">4</div>
<div class="t" style="left:0px;top:235.15px;width:9px;height:6px;font:4.6px/6px 'Liberation Sans', sans-serif;color:#d8d8d8;text-align:center;transform:rotate(-90deg)">5</div>
<div class="t" style="left:0px;top:256.90px;width:9px;height:6px;font:4.6px/6px 'Liberation Sans', sans-serif;color:#d8d8d8;text-align:center;transform:rotate(-90deg)">6</div>
<div class="t" style="left:0px;top:278.65px;width:9px;height:6px;font:4.6px/6px 'Liberation Sans', sans-serif;color:#d8d8d8;text-align:center;transform:rotate(-90deg)">7</div>
<div class="t" style="left:0px;top:300.40px;width:9px;height:6px;font:4.6px/6px 'Liberation Sans', sans-serif;color:#d8d8d8;text-align:center;transform:rotate(-90deg)">8</div>
<div class="t" style="left:0px;top:322.15px;width:9px;height:6px;font:4.6px/6px 'Liberation Sans', sans-serif;color:#d8d8d8;text-align:center;transform:rotate(-90deg)">9</div>
<div class="t" style="left:0px;top:343.90px;width:9px;height:6px;font:4.6px/6px 'Liberation Sans', sans-serif;color:#d8d8d8;text-align:center;transform:rotate(-90deg)">10</div>
<div class="t" style="left:0px;top:365.65px;width:9px;height:6px;font:4.6px/6px 'Liberation Sans', sans-serif;color:#d8d8d8;text-align:center;transform:rotate(-90deg)">11</div>
<div class="t" style="left:0px;top:387.40px;width:9px;height:6px;font:4.6px/6px 'Liberation Sans', sans-serif;color:#d8d8d8;text-align:center;transform:rotate(-90deg)">12</div>
<div class="t" style="left:0px;top:409.15px;width:9px;height:6px;font:4.6px/6px 'Liberation Sans', sans-serif;color:#d8d8d8;text-align:center;transform:rotate(-90deg)">13</div>
<div class="t" style="left:0px;top:104.65px;width:9px;height:6px;font:4.6px/6px 'Liberation Sans', sans-serif;color:#d8d8d8;text-align:center;transform:rotate(-90deg)">1</div>
<div class="t" style="left:0px;top:82.90px;width:9px;height:6px;font:4.6px/6px 'Liberation Sans', sans-serif;color:#d8d8d8;text-align:center;transform:rotate(-90deg)">2</div>
<div class="r" style="left:741.80px;top:64.00px;width:8.20px;height:360.00px;background:#313131;border-left:0.5px solid #3c3c3c;"></div>
<div class="r" style="left:743.80px;top:65.30px;width:5.10px;height:27.20px;background:#6a6a6a;border-radius:3px;"></div>
<div class="r" style="left:50.50px;top:74.50px;width:652.50px;height:349.50px;background:#ffffff;box-shadow:0 0 1.5px 0.5px #161616;"></div>
<div class="r" style="left:105.00px;top:116.00px;width:0.80px;height:13.80px;background:#c2c2c2;"></div>
<div class="r" style="left:92.00px;top:129.00px;width:13.80px;height:0.80px;background:#c2c2c2;"></div>
<div class="r" style="left:464.20px;top:116.00px;width:0.80px;height:13.60px;background:#c2c2c2;"></div>
<div class="r" style="left:464.20px;top:128.90px;width:13.80px;height:0.70px;background:#c2c2c2;"></div>
<div class="r" style="left:520.00px;top:75.00px;width:0.80px;height:349.00px;background:#e4e4e4;"></div>
<div style="position:absolute;white-space:nowrap;left:133.6px;top:135.54px;width:166.4px;font:normal bold 9.15px/9.15px 'Liberation Serif', serif;color:#111;" class="t doc">3. Data analysis</div>
<div style="position:absolute;white-space:nowrap;left:133.6px;top:151.14px;width:331.0px;font:normal normal 9.15px/9.15px 'Liberation Serif', serif;color:#111;text-align:justify;text-align-last:justify;" class="t doc"><span class="sq">Phiếu</span> <span class="sq">khảo</span> <span class="sq">sát</span> <span class="sq">được</span> <span class="sq">xây</span> <span class="sq">dựng</span> <span class="sq">gồm</span> 02 <span class="sq">phần:</span> <span class="sq">phần</span> (1) Basic information <span class="sq">và</span> <span class="sq">phần</span> (2) bao</div>
<div style="position:absolute;white-space:nowrap;left:106px;top:162.24px;width:358.6px;font:normal normal 9.15px/9.15px 'Liberation Serif', serif;color:#111;text-align:justify;text-align-last:justify;" class="t doc"><span class="sq">gồm_</span> <span class="sq">gồm</span> <span style="color:#e01010;border-left:0.9px solid #e85a5a;border-right:0.9px solid #e85a5a;padding:0.4px 0.6px 0 0.6px;-webkit-text-stroke:0.1px #e01010">18</span> <span class="sq">câu</span> <span class="sq">hỏi</span> <span class="sq">dùng</span> thang <span class="sq">đo</span> Likert 5 <span class="sq">từ</span> <span class="sq">“Hoàn</span> <span class="sq">toàn</span> <span class="sq">không</span> <span class="sq">đồng</span> <span class="sq">ý”</span> <span class="sq">tới</span> <span class="sq">“Hoàn</span> <span class="sq">toàn</span> <span class="sq">đồng</span></div>
<div style="position:absolute;white-space:nowrap;left:106px;top:173.34px;width:358.6px;font:normal normal 9.15px/9.15px 'Liberation Serif', serif;color:#111;text-align:justify;text-align-last:justify;" class="t doc">ý” <span class="sq">đo</span> <span class="sq">lường</span> <span class="sq">cho</span> 02 <span class="sq">nhân</span> <span class="sq">tố</span> <span class="sq">độc</span> <span class="sq">lập</span> <span class="sq">và</span> 01 <span class="sq">nhân</span> <span class="sq">tố</span> <span class="sq">phụ</span> <span class="sq">thuộc</span> <span class="sq">liên</span> <span class="sq">quan</span> <span class="sq">đến</span> the correlation between</div>
<div style="position:absolute;white-space:nowrap;left:106px;top:184.24px;width:358.6px;font:normal normal 9.15px/9.15px 'Liberation Serif', serif;color:#111;text-align:justify;text-align-last:justify;" class="t doc">Facebook buzzwords usage and self-presentation: A case study of the word “Gaslighting”. <span class="sq">Tổng</span></div>
<div style="position:absolute;white-space:nowrap;left:106px;top:195.24px;width:358.6px;font:normal normal 9.15px/9.15px 'Liberation Serif', serif;color:#111;text-align:justify;text-align-last:justify;" class="t doc"><span class="sq">số</span> <span class="sq">phiếu</span> <span class="sq">khảo</span> <span class="sq">sát</span> <span class="sq">sau</span> <span class="sq">khi</span> <span class="sq">đã</span> qua <span class="sq">kiểm</span> <span class="sq">tra</span> <span class="sq">sàng</span> <span class="sq">lọc</span> <span class="sq">là</span> <span style="color:#e01010;background:rgba(240,130,140,0.35);border-left:0.9px solid #e85a5a;border-right:1.4px solid #eba0a6;padding:0 0.4px 0 0.4px;-webkit-text-stroke:0.1px #e01010">404</span> <span class="sq">và</span> được đưa vào mã hóa, nhập liệu và</div>
<div style="position:absolute;white-space:nowrap;left:106px;top:206.34px;width:294px;font:normal normal 9.15px/9.15px 'Liberation Serif', serif;color:#111;" class="t doc">phân tích <span class="sq">trên</span> <span class="sq">phần</span> <span class="sq">mềm</span> SPSS 20.0.</div>
<div style="position:absolute;white-space:nowrap;left:133.6px;top:222.84px;width:331.0px;font:normal normal 9.15px/9.15px 'Liberation Serif', serif;color:#111;text-align:justify;text-align-last:justify;" class="t doc"><span class="sq">Các</span> <span class="sq">bước</span> <span class="sq">phân</span> <span class="sq">tích</span> <span class="sq">dữ</span> <span class="sq">liệu</span> <span class="sq">trong</span> <span class="sq">nghiên</span> <span class="sq">cứu</span> <span class="sq">này</span> bao <span class="sq">gồm:</span> <span class="sq">thống</span> <span class="sq">kê</span> <span class="sq">mô</span> <span class="sq">tả</span> <span class="sq">mẫu,</span> <span class="sq">phân</span> <span class="sq">tích</span></div>
<div style="position:absolute;white-space:nowrap;left:106px;top:233.64px;width:358.6px;font:normal normal 9.15px/9.15px 'Liberation Serif', serif;color:#111;text-align:justify;text-align-last:justify;" class="t doc"><span class="sq">độ</span> tin <span class="sq">cậy</span> Cronbach’s alpha; <span class="sq">phân</span> <span class="sq">tích</span> <span class="sq">nhân</span> <span class="sq">tố</span> <span class="sq">khám</span> <span class="sq">phá</span> (EFA), <span class="sq">phân</span> <span class="sq">tích</span> <span class="sq">tương</span> <span class="sq">quan</span> (Pearson)</div>
<div style="position:absolute;white-space:nowrap;left:106px;top:244.54px;width:294px;font:normal normal 9.15px/9.15px 'Liberation Serif', serif;color:#111;" class="t doc"><span class="sq">và</span> <span class="sq">phân</span> <span class="sq">tích</span> <span class="sq">hồi</span> <span class="sq">quy</span> <span class="sq">tuyến</span> <span class="sq">tính</span> <span class="sq">đa</span> <span class="sq">biến.</span></div>
<div style="position:absolute;white-space:nowrap;left:133.6px;top:260.34px;width:166.4px;font:normal bold 9.15px/9.15px 'Liberation Serif', serif;color:#111;" class="t doc">4. Findings</div>
<div style="position:absolute;white-space:nowrap;left:133.6px;top:275.94px;width:166.4px;font:italic bold 9.15px/9.15px 'Liberation Serif', serif;color:#111;" class="t doc">4.1. <span style="text-decoration:underline #444;text-decoration-thickness:0.6px;text-underline-offset:1px;"><span class="sq">Thống</span> <span class="sq">kê</span> <span class="sq">mô</span> <span class="sq">tả</span> <span class="sq">mẫu</span></span></div>
<div style="position:absolute;white-space:nowrap;left:133.6px;top:293.64px;width:326.4px;font:normal normal 9.15px/9.15px 'Liberation Serif', serif;color:#111;" class="t doc">Kết quả thống kê mô tả mẫu khảo sát được thể hiện trong Bảng 1</div>
<div style="position:absolute;white-space:nowrap;left:133.6px;top:311.54px;width:326.4px;font:normal normal 9.15px/9.15px 'Liberation Serif', serif;color:#111;" class="t doc">Bảng 1: Thống kê mô tả mẫu</div>
<svg class="r" style="left:0;top:0" width="750" height="424"><path d="M146.7 161.2H520" stroke="#e85a5a" stroke-width="0.8" stroke-dasharray="1.6 1.6"/><path d="M320.6 194.4H520.5" stroke="#e8606a" stroke-width="0.9"/></svg>
<div class="r" style="left:519.90px;top:149.70px;width:1.50px;height:21.90px;background:#e8505c;"></div>
<div class="t" style="top:153.42px;font:normal bold 6.9px/6.9px 'Liberation Serif', serif;color:#111;left:526.10px;-webkit-text-stroke:0.2px #222;">Vân Nhi</div>
<div class="t" style="top:161.82px;font:normal normal 6.9px/6.9px 'Liberation Serif', serif;color:#222;left:526.10px;-webkit-text-stroke:0.2px #222;">Nên làm tròn số câu hỏi</div>
<div class="r" style="left:520.20px;top:182.20px;width:182.80px;height:23.00px;background:transparent;box-sizing:border-box;border:1px solid #ec7f88;border-right:none;"></div>
<div class="t" style="top:187.02px;font:normal bold 6.9px/6.9px 'Liberation Serif', serif;color:#111;left:526.10px;-webkit-text-stroke:0.2px #222;">Vân Nhi</div>
<div class="t" style="top:195.32px;font:normal normal 6.9px/6.9px 'Liberation Serif', serif;color:#222;left:526.10px;-webkit-text-stroke:0.2px #222;">Kiểm tra lại con số chính xác</div>
<div class="t" style="top:187.52px;font:normal normal 6.9px/6.9px 'Liberation Serif', serif;color:#222;left:385.40px;width:300px;text-align:right;-webkit-text-stroke:0.2px #222;">8 minutes ago</div>
<svg class="r" style="left:688.5px;top:184.5px" width="10" height="10" viewBox="0 0 10 10"><path d="M2 3.5h6.5v4h-3.5l-1.8 1.5v-1.5h-1.2z" fill="#fff" stroke="#999" stroke-width="0.5"/><path d="M1 3.5l2.2-2.2M1 3.5h2.4M1 3.5v-2.4" stroke="#7a4cd0" stroke-width="0.8" fill="none"/></svg>
<div class="r" style="left:145.35px;top:326.75px;width:0.90px;height:97.25px;background:#666666;"></div>
<div class="r" style="left:203.45px;top:326.75px;width:0.90px;height:97.25px;background:#666666;"></div>
<div class="r" style="left:328.05px;top:326.75px;width:0.90px;height:97.25px;background:#666666;"></div>
<div class="r" style="left:375.15px;top:326.75px;width:0.90px;height:97.25px;background:#666666;"></div>
<div class="r" style="left:423.25px;top:326.75px;width:0.90px;height:97.25px;background:#666666;"></div>
<div class="r" style="left:145.40px;top:326.80px;width:278.70px;height:0.80px;background:#666666;"></div>
<div class="r" style="left:145.40px;top:349.10px;width:278.70px;height:0.80px;background:#666666;"></div>
<div class="r" style="left:203.50px;top:360.00px;width:220.60px;height:0.80px;background:#666666;"></div>
<div class="r" style="left:203.50px;top:370.90px;width:220.60px;height:0.80px;background:#666666;"></div>
<div class="r" style="left:145.40px;top:381.80px;width:278.70px;height:0.80px;background:#666666;"></div>
<div class="r" style="left:145.40px;top:392.80px;width:278.70px;height:0.80px;background:#666666;"></div>
<div class="r" style="left:203.50px;top:403.80px;width:220.60px;height:0.80px;background:#666666;"></div>
<div class="r" style="left:203.50px;top:414.80px;width:220.60px;height:0.80px;background:#666666;"></div>
<div class="t" style="top:330.18px;font:normal normal 9.1px/9.1px 'Liberation Serif', serif;color:#111;left:74.85px;width:200px;text-align:center;-webkit-text-stroke:0.25px #222;">Demographic</div>
<div class="t" style="top:340.38px;font:normal normal 9.1px/9.1px 'Liberation Serif', serif;color:#111;left:74.85px;width:200px;text-align:center;-webkit-text-stroke:0.25px #222;">Variables</div>
<div class="t" style="top:337.28px;font:normal normal 9.1px/9.1px 'Liberation Serif', serif;color:#111;left:166.20px;width:200px;text-align:center;-webkit-text-stroke:0.25px #222;">Categories</div>
<div class="t" style="top:329.98px;font:normal normal 9.1px/9.1px 'Liberation Serif', serif;color:#111;left:333.00px;-webkit-text-stroke:0.25px #222;">Frequency</div>
<div class="t" style="top:329.98px;font:normal normal 9.1px/9.1px 'Liberation Serif', serif;color:#111;left:380.30px;-webkit-text-stroke:0.25px #222;">Percentage</div>
<div class="t" style="top:350.68px;font:normal normal 9.1px/9.1px 'Liberation Serif', serif;color:#111;left:149.90px;-webkit-text-stroke:0.25px #222;"><span class="sq">Giới</span> <span class="sq">tính</span></div>
<div class="t" style="top:350.68px;font:normal normal 9.1px/9.1px 'Liberation Serif', serif;color:#111;left:208.30px;-webkit-text-stroke:0.25px #222;">Nam</div>
<div class="t" style="top:350.68px;font:normal normal 9.1px/9.1px 'Liberation Serif', serif;color:#111;left:333.00px;-webkit-text-stroke:0.25px #222;">182</div>
<div class="t" style="top:350.68px;font:normal normal 9.1px/9.1px 'Liberation Serif', serif;color:#111;left:380.30px;-webkit-text-stroke:0.25px #222;">45.0</div>
<div class="t" style="top:361.58px;font:normal normal 9.1px/9.1px 'Liberation Serif', serif;color:#111;left:208.30px;-webkit-text-stroke:0.25px #222;"><span class="sq">Nữ</span></div>
<div class="t" style="top:361.58px;font:normal normal 9.1px/9.1px 'Liberation Serif', serif;color:#111;left:333.00px;-webkit-text-stroke:0.25px #222;">181</div>
<div class="t" style="top:361.58px;font:normal normal 9.1px/9.1px 'Liberation Serif', serif;color:#111;left:380.30px;-webkit-text-stroke:0.25px #222;">44.8</div>
<div class="t" style="top:372.48px;font:normal normal 9.1px/9.1px 'Liberation Serif', serif;color:#111;left:208.30px;-webkit-text-stroke:0.25px #222;"><span class="sq">Khác</span></div>
<div class="t" style="top:372.48px;font:normal normal 9.1px/9.1px 'Liberation Serif', serif;color:#111;left:333.00px;-webkit-text-stroke:0.25px #222;">41</div>
<div class="t" style="top:372.48px;font:normal normal 9.1px/9.1px 'Liberation Serif', serif;color:#111;left:380.30px;-webkit-text-stroke:0.25px #222;">10.1</div>
<div class="t" style="top:383.38px;font:normal normal 9.1px/9.1px 'Liberation Serif', serif;color:#111;left:149.90px;-webkit-text-stroke:0.25px #222;"><span class="sq">Độ</span> <span class="sq">tuổi</span></div>
<div class="t" style="top:383.38px;font:normal normal 9.1px/9.1px 'Liberation Serif', serif;color:#111;left:208.30px;-webkit-text-stroke:0.25px #222;">18 – 22 <span class="sq">tuổi</span></div>
<div class="t" style="top:383.38px;font:normal normal 9.1px/9.1px 'Liberation Serif', serif;color:#111;left:333.00px;-webkit-text-stroke:0.25px #222;">404</div>
<div class="t" style="top:383.38px;font:normal normal 9.1px/9.1px 'Liberation Serif', serif;color:#111;left:380.30px;-webkit-text-stroke:0.25px #222;">100</div>
<div class="t" style="top:394.38px;font:normal normal 9.1px/9.1px 'Liberation Serif', serif;color:#111;left:149.90px;-webkit-text-stroke:0.25px #222;"><span class="sq">Mức</span> <span class="sq">độ</span> <span class="sq">sử</span></div>
<div class="t" style="top:394.38px;font:normal normal 9.1px/9.1px 'Liberation Serif', serif;color:#111;left:208.30px;-webkit-text-stroke:0.25px #222;"><span class="sq">Hiếm</span> <span class="sq">khi</span> (1-2 <span class="sq">ngày/tuần)</span></div>
<div class="t" style="top:394.38px;font:normal normal 9.1px/9.1px 'Liberation Serif', serif;color:#111;left:333.00px;-webkit-text-stroke:0.25px #222;">61</div>
<div class="t" style="top:394.38px;font:normal normal 9.1px/9.1px 'Liberation Serif', serif;color:#111;left:380.30px;-webkit-text-stroke:0.25px #222;">15.1</div>
<div class="t" style="top:405.38px;font:normal normal 9.1px/9.1px 'Liberation Serif', serif;color:#111;left:149.90px;-webkit-text-stroke:0.25px #222;"><span class="sq">dụng</span></div>
<div class="t" style="top:405.38px;font:normal normal 9.1px/9.1px 'Liberation Serif', serif;color:#111;left:208.30px;-webkit-text-stroke:0.25px #222;"><span class="sq">Thỉnh</span> <span class="sq">thoảng</span> (3-4 <span class="sq">ngày/tuần)</span></div>
<div class="t" style="top:405.38px;font:normal normal 9.1px/9.1px 'Liberation Serif', serif;color:#111;left:333.00px;-webkit-text-stroke:0.25px #222;">63</div>
<div class="t" style="top:405.38px;font:normal normal 9.1px/9.1px 'Liberation Serif', serif;color:#111;left:380.30px;-webkit-text-stroke:0.25px #222;">15.6</div>
<div class="t" style="top:416.38px;font:normal normal 9.1px/9.1px 'Liberation Serif', serif;color:#111;left:149.90px;-webkit-text-stroke:0.25px #222;">Facebook</div>
<div class="t" style="top:416.38px;font:normal normal 9.1px/9.1px 'Liberation Serif', serif;color:#111;left:208.30px;-webkit-text-stroke:0.25px #222;"><span class="sq">Thường</span> <span class="sq">xuyên</span> (5-6 <span class="sq">ngày/tuần)</span></div>
<div class="t" style="top:416.38px;font:normal normal 9.1px/9.1px 'Liberation Serif', serif;color:#111;left:333.00px;-webkit-text-stroke:0.25px #222;">117</div>
<div class="t" style="top:416.38px;font:normal normal 9.1px/9.1px 'Liberation Serif', serif;color:#111;left:380.30px;-webkit-text-stroke:0.25px #222;">29.0</div>
<div class="r" style="left:192.50px;top:40.70px;width:149.30px;height:41.30px;background:#2f2f2f;border-radius:4px;border:0.6px solid #4a4a4a;box-sizing:border-box;box-shadow:0 1px 3px rgba(0,0,0,0.5);"></div>
<svg class="r" style="left:203.5px;top:44px" width="10" height="9" viewBox="0 0 10 9"><path d="M1.8 1.8h7.6v5h-4.3l-2.2 1.9v-1.9h-1.1z" fill="#f2f2f2"/><circle cx="1.8" cy="1.8" r="1.5" fill="#e03838"/></svg>
<div class="t" style="top:45.13px;font:normal normal 8.0px/8.0px 'Liberation Sans', sans-serif;color:#ececec;-webkit-text-stroke:0.1px #ececec;left:215.90px;transform:scaleX(0.925);transform-origin:left center;">Delete</div>
<svg class="r" style="left:203.5px;top:56.5px" width="10" height="9" viewBox="0 0 10 9"><path d="M1.8 1.8h7.6v5h-4.3l-2.2 1.9v-1.9h-1.1z" fill="#5a5a5a"/><circle cx="1.8" cy="1.8" r="1.5" fill="#6a3535"/></svg>
<div class="t" style="top:57.63px;font:normal normal 8.0px/8.0px 'Liberation Sans', sans-serif;color:#5e5e5e;-webkit-text-stroke:0.1px #5e5e5e;left:215.90px;transform:scaleX(0.925);transform-origin:left center;">Delete All Comments Shown</div>
<div class="r" style="left:192.80px;top:67.20px;width:147.20px;height:13.80px;background:#fdb100;box-sizing:border-box;border:2px solid #e80000;"></div>
<svg class="r" style="left:203.5px;top:69px" width="10" height="9" viewBox="0 0 10 9"><path d="M1.8 1.8h7.6v5h-4.3l-2.2 1.9v-1.9h-1.1z" fill="#f8f8f8"/><circle cx="1.8" cy="1.8" r="1.5" fill="#e03838"/></svg>
<div class="t" style="top:70.23px;font:normal normal 8.0px/8.0px 'Liberation Sans', sans-serif;color:#ffffff;-webkit-text-stroke:0.1px #ffffff;left:215.90px;transform:scaleX(0.925);transform-origin:left center;">Delete All Comments in Document</div>
</body></html>
